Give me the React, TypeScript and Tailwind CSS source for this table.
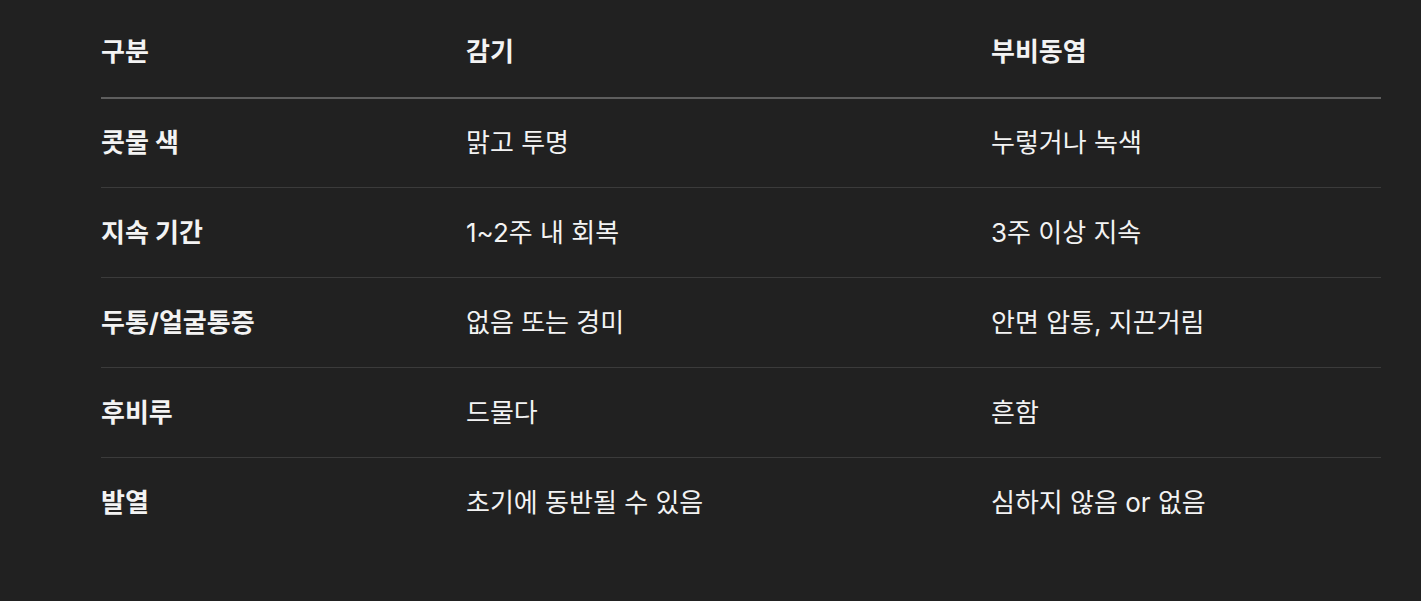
const rows: [string, string, string][] = [
  ['콧물 색', '맑고 투명', '누렇거나 녹색'],
  ['지속 기간', '1~2주 내 회복', '3주 이상 지속'],
  ['두통/얼굴통증', '없음 또는 경미', '안면 압통, 지끈거림'],
  ['후비루', '드물다', '흔함'],
  ['발열', '초기에 동반될 수 있음', '심하지 않음 or 없음'],
]

export default function App() {
  return (
    <div
      className="min-h-[601px] w-full bg-[#212121] text-[#f3f3f3] text-[26px] leading-none"
      style={{ fontFamily: 'Inter, "Noto Sans CJK KR", sans-serif' }}
    >
      <div className="ml-[101px] w-[1280px]">
        <div className="box-border grid h-[99px] grid-cols-[365px_525px_1fr] items-center border-b-2 border-[#5e5e5e] pt-[7px] font-bold">
          <div>구분</div>
          <div>감기</div>
          <div>부비동염</div>
        </div>
        {rows.map((r, i) => (
          <div
            key={r[0]}
            className={`box-border grid grid-cols-[365px_525px_1fr] items-center ${
              i === 0 ? 'h-[89px]' : 'h-[90px]'
            } ${i < rows.length - 1 ? 'border-b border-[#3b3b3b]' : ''}`}
          >
            <div className="font-bold">{r[0]}</div>
            <div>{r[1]}</div>
            <div>{r[2]}</div>
          </div>
        ))}
      </div>
    </div>
  )
}
